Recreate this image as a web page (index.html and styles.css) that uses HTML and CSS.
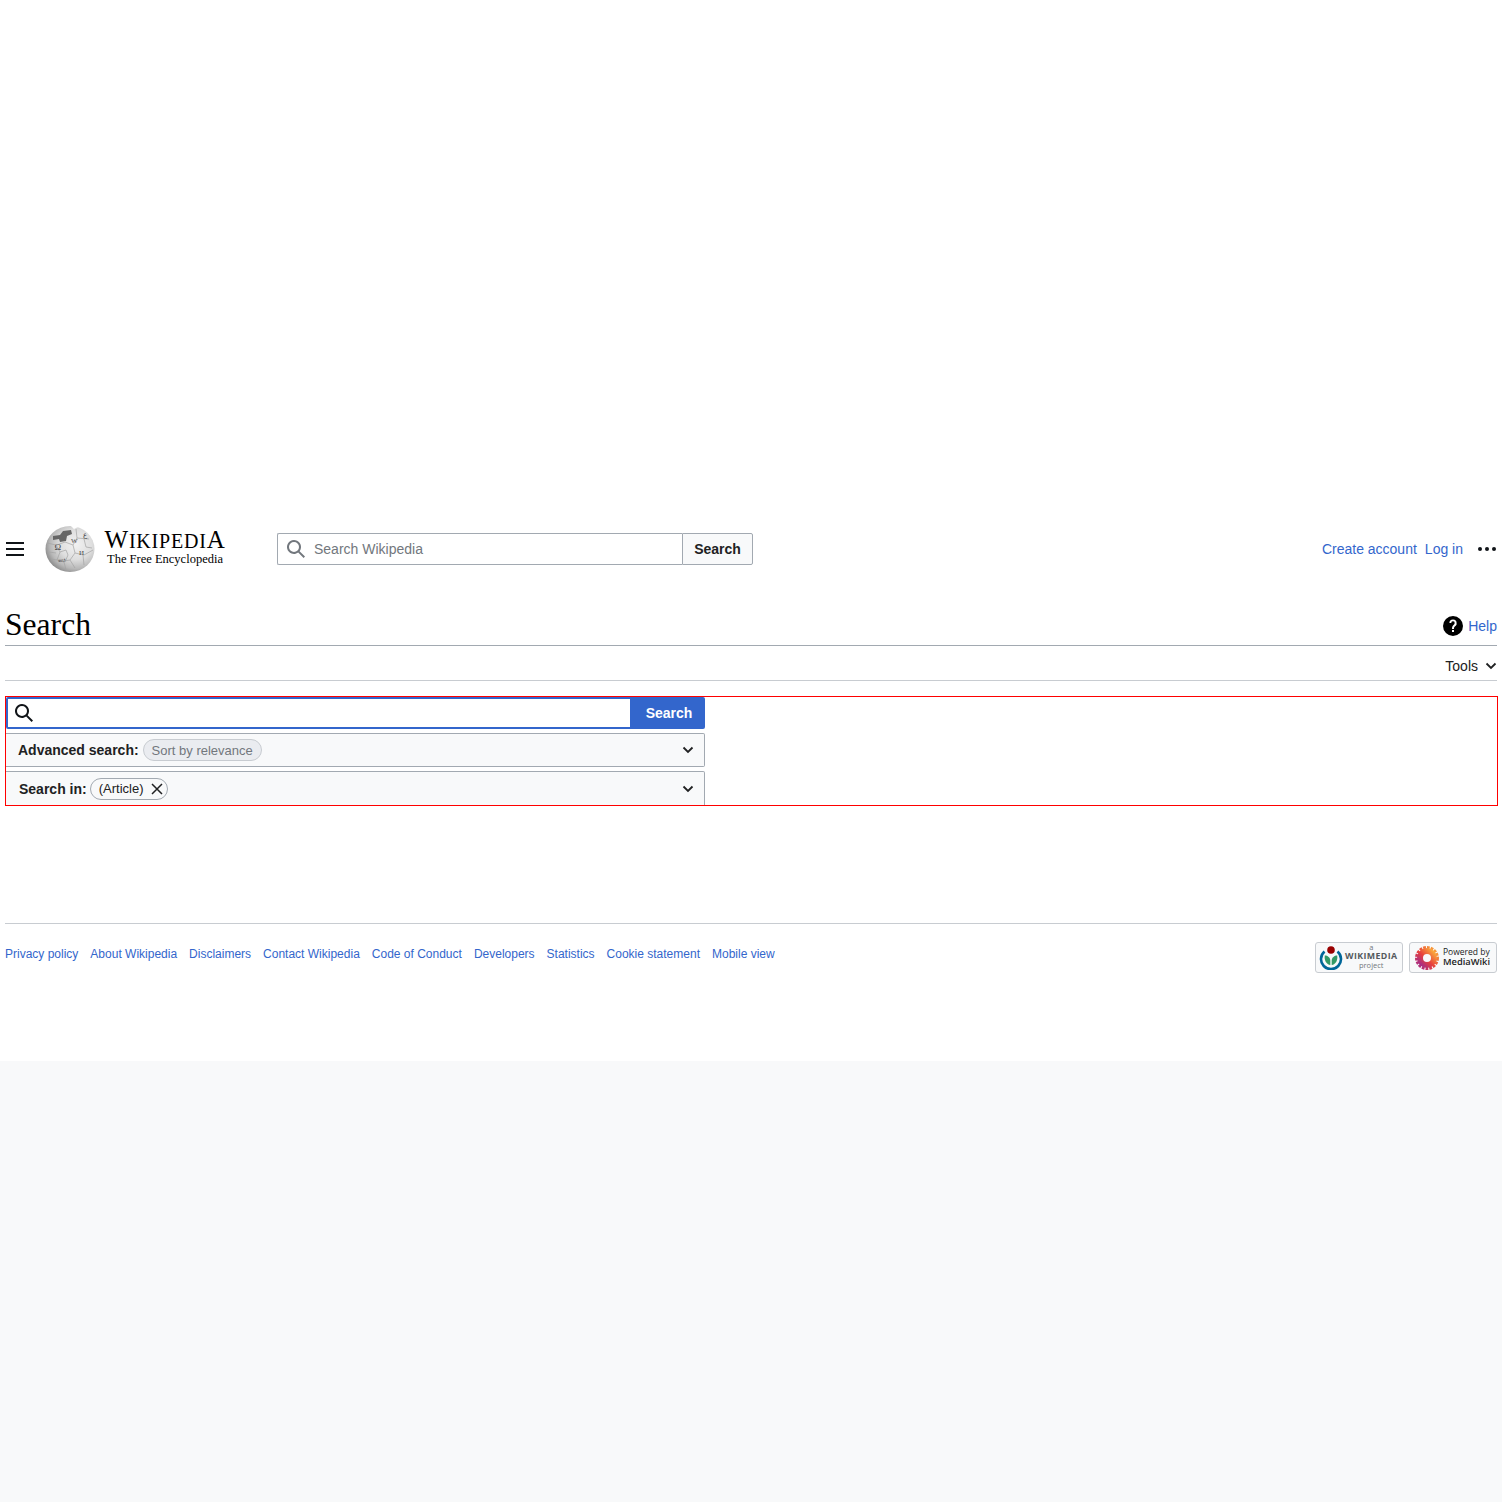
FILE: index.html
```html
<!DOCTYPE html>
<html lang="en">
<head>
  <meta charset="UTF-8" />
  <title>Search - Wikipedia</title>
  <link rel="stylesheet" href="styles.css">
</head>
<body>
  <div class="page">
    <header class="site-header">
      <button class="menu-btn" aria-label="Main menu"><span></span><span></span><span></span></button>
      <a class="logo">
        <svg class="globe" width="50" height="50" viewBox="0 0 50 50">
          <defs>
            <radialGradient id="globeFill" cx="62%" cy="40%" r="66%">
              <stop offset="0" stop-color="#f2f2f2" />
              <stop offset="0.5" stop-color="#dedede" />
              <stop offset="0.8" stop-color="#b8b8b8" />
              <stop offset="1" stop-color="#8a8a8a" />
            </radialGradient>
          </defs>
          <ellipse cx="25" cy="25" rx="24.500" ry="23" fill="url(#globeFill)" />
          <path d="M24 0l5 5 6-3 1-2zM15 0l3 3 3-3zM38 2l3 5 6 1-2-8z" fill="#ffffff" />
          <path d="M8 12l7-1 3-4 8-1 1 4-5 2-1 5-6 1-1-3-6 1z" fill="#666666" />
          <path d="M2 19l9 2 4 7-3 8 7 2 2 8M20 18l8 3 2 8 9 2 9-5M30 29l-5 7 5 8M28 21l4-7 12 1M12 21l8-3M38 31l1 10M6 35l6 1M32 14l-1-9M15 28l6-2 2 5-3 7M4 28l7 1M39 15l2 8 6 1M25 36l-6 1" fill="none" stroke="#a4a4a4" stroke-width="0.700" />
          <text class="globe-glyph globe-omega" x="9.500" y="26">Ω</text>
          <text class="globe-glyph" x="26" y="19">W</text>
          <text class="globe-glyph" x="34" y="31">И</text>
          <text class="globe-glyph" x="13" y="38">ஸ</text>
          <text class="globe-glyph" x="38" y="13">ع</text>
        </svg>
        <span class="wordmark">
          <span class="wordmark-name">W<span class="wordmark-small">ikipedi</span>A</span>
          <span class="wordmark-tag">The Free Encyclopedia</span>
        </span>
      </a>
      <form class="top-search">
        <div class="top-search-input">
          <svg width="20" height="20" viewBox="0 0 20 20"><path fill="#72777d" d="M12.200 13.600a7 7 0 1 1 1.400-1.400l5.400 5.400-1.400 1.400zM3 8a5 5 0 1 0 10 0A5 5 0 0 0 3 8z" /></svg>
          <span>Search Wikipedia</span>
        </div>
        <button class="top-search-btn" type="button">Search</button>
      </form>
      <nav class="user-links">
        <a>Create account</a>
        <a>Log in</a>
        <span class="dots"><i></i><i></i><i></i></span>
      </nav>
    </header>

    <div class="title-row">
      <h1>Search</h1>
      <a class="help">
        <svg width="20" height="20" viewBox="0 0 20 20"><path d="M10 0a10 10 0 1 0 0 20 10 10 0 0 0 0-20zm1 16H9v-2h2zm2.700-7.800a3.600 3.600 0 0 1-1 1.500l-.9.9c-.5.5-.8.9-.8 2.400H9v-.5c0-1.100.3-2.100.8-2.800l1.200-1.300c.4-.3.6-.7.6-1.200A1.600 1.600 0 0 0 10 5.200 1.600 1.600 0 0 0 8.300 7H6.400a3.600 3.600 0 0 1 7.200 0c0 .4 0 .8-.1 1.200z" /></svg>
        <span>Help</span>
      </a>
    </div>

    <div class="tools-row">
      <span>Tools</span>
      <svg class="chev" width="12" height="12" viewBox="0 0 12 12"><path d="M1.500 3.500L6 8l4.500-4.500" /></svg>
    </div>

    <form class="search-form">
      <div class="search-line">
        <div class="search-input">
          <svg width="20" height="20" viewBox="0 0 20 20"><path fill="#101418" d="M12.200 13.600a7 7 0 1 1 1.400-1.400l5.400 5.400-1.400 1.400zM3 8a5 5 0 1 0 10 0A5 5 0 0 0 3 8z" /></svg>
        </div>
        <button class="search-btn" type="button">Search</button>
      </div>
      <div class="option-row advanced">
        <b>Advanced search:</b>
        <span class="chip chip-off">Sort by relevance</span>
        <svg class="chev" width="12" height="12" viewBox="0 0 12 12"><path d="M1.500 3.500L6 8l4.500-4.500" /></svg>
      </div>
      <div class="option-row namespace">
        <b>Search in:</b>
        <span class="chip chip-article">(Article)
          <svg width="12" height="12" viewBox="0 0 12 12"><path d="M1 1l10 10M11 1L1 11" /></svg>
        </span>
        <svg class="chev" width="12" height="12" viewBox="0 0 12 12"><path d="M1.500 3.500L6 8l4.500-4.500" /></svg>
      </div>
    </form>

    <footer class="site-footer">
      <ul class="footer-links">
        <li><a>Privacy policy</a></li>
        <li><a>About Wikipedia</a></li>
        <li><a>Disclaimers</a></li>
        <li><a>Contact Wikipedia</a></li>
        <li><a>Code of Conduct</a></li>
        <li><a>Developers</a></li>
        <li><a>Statistics</a></li>
        <li><a>Cookie statement</a></li>
        <li><a>Mobile view</a></li>
      </ul>
      <div class="badges">
        <a class="badge">
          <svg width="24" height="24" viewBox="0 0 24 24">
            <path d="M5.500 5.500A10 10 0 1 0 18.500 5.500" fill="none" stroke="#006699" stroke-width="2.600" />
            <path d="M11.300 19C7.500 18.500 5 14.500 5.800 9.500 8.500 9.500 11.300 11.500 11.300 14.500z" fill="#339966" />
            <path d="M12.700 19C16.500 18.500 19 14.500 18.200 9.500 15.500 9.500 12.700 11.500 12.700 14.500z" fill="#339966" />
            <circle cx="12" cy="4" r="3.800" fill="#990000" />
          </svg>
          <span class="badge-wm"><small>a</small><b>WIKIMEDIA</b><small>project</small></span>
        </a>
        <a class="badge badge-powered">
          <svg width="24" height="24" viewBox="0 0 24 24">
            <defs>
              <linearGradient id="mwFill" x1="0" y1="1" x2="1" y2="0">
                <stop offset="0" stop-color="#a02c8c" />
                <stop offset="0.45" stop-color="#e8413c" />
                <stop offset="1" stop-color="#fbb03b" />
              </linearGradient>
            </defs>
            <circle cx="12" cy="12" r="10" fill="none" stroke="url(#mwFill)" stroke-width="4" stroke-dasharray="2.600 1" />
            <circle cx="12" cy="12" r="7" fill="none" stroke="url(#mwFill)" stroke-width="6" />
          </svg>
          <span class="badge-mw">Powered by<b>MediaWiki</b></span>
        </a>
      </div>
    </footer>
  </div>
</body>
</html>
```

FILE: styles.css
```css
* {
  box-sizing: border-box;
}

body {
  margin: 0;
  background: #f8f9fa;
  color: #202122;
  font-family: "Liberation Sans", Arial, sans-serif;
  font-size: 14px;
}

a {
  color: #3366cc;
  text-decoration: none;
}

.page {
  height: 1061px;
  padding: 524px 5px 0;
  background: #ffffff;
}

/* header */
.site-header {
  display: flex;
  align-items: center;
  height: 50px;
}

.menu-btn {
  display: flex;
  flex-direction: column;
  gap: 4px;
  width: 18px;
  margin-left: 1px;
  padding: 0;
  border: none;
  background: none;
}

.menu-btn span {
  display: block;
  width: 18px;
  height: 2px;
  background: #101418;
}

.logo {
  display: flex;
  align-items: center;
  margin-left: 21px;
  color: #000000;
}

.globe-glyph {
  font-family: "Liberation Serif", serif;
  font-size: 7px;
  fill: #4a4a4a;
}

.globe-omega {
  font-size: 9px;
}

.wordmark {
  display: flex;
  flex-direction: column;
  align-items: center;
  width: 120px;
  margin-bottom: 4px;
  margin-left: 10px;
  font-family: "Liberation Serif", serif;
}

.wordmark-name {
  font-size: 25px;
  line-height: 24px;
  letter-spacing: 0.800px;
  white-space: nowrap;
}

.wordmark-small {
  font-size: 20px;
  text-transform: uppercase;
}

.wordmark-tag {
  font-size: 12.500px;
  line-height: 13px;
}

.top-search {
  display: flex;
  width: 476px;
  height: 32px;
  margin-left: 52px;
}

.top-search-input {
  display: flex;
  flex: 1;
  align-items: center;
  gap: 8px;
  padding-left: 8px;
  border: 1px solid #a2a9b1;
  border-right: none;
  border-radius: 2px 0 0 2px;
  color: #72777d;
}

.top-search-btn {
  width: 71px;
  border: 1px solid #a2a9b1;
  border-radius: 0 2px 2px 0;
  background: #f8f9fa;
  color: #202122;
  font-family: inherit;
  font-size: 14px;
  font-weight: bold;
}

.user-links {
  display: flex;
  align-items: center;
  gap: 8px;
  margin-left: auto;
}

.dots {
  display: flex;
  gap: 3px;
  margin-left: 7px;
  padding-right: 1px;
}

.dots i {
  display: block;
  width: 4px;
  height: 4px;
  border-radius: 50%;
  background: #101418;
}

/* title */
.title-row {
  display: flex;
  align-items: flex-end;
  justify-content: space-between;
  height: 47px;
  margin-top: 25px;
  border-bottom: 1px solid #a2a9b1;
}

h1 {
  margin: 0 0 1px;
  color: #000000;
  font-family: "Liberation Serif", serif;
  font-size: 31.600px;
  font-weight: normal;
  line-height: 38px;
}

.help {
  display: flex;
  align-items: center;
  gap: 5px;
  margin-bottom: 9px;
}

.tools-row {
  display: flex;
  align-items: center;
  justify-content: flex-end;
  gap: 7px;
  height: 35px;
  padding-top: 6px;
  border-bottom: 1px solid #c8ccd1;
  color: #202122;
}

.chev path {
  fill: none;
  stroke: #202122;
  stroke-width: 1.800;
}

/* search form */
.search-form {
  height: 110px;
  margin: 15px -1px 0 0;
  border: 1px solid #ff0000;
  overflow: hidden;
}

.search-line {
  display: flex;
  width: 699px;
  height: 32px;
}

.search-input {
  display: flex;
  flex: 1;
  align-items: center;
  padding-left: 6px;
  border: 2px solid #3366cc;
  border-radius: 2px 0 0 2px;
}

.search-btn {
  width: 73px;
  padding: 0 0 0 1px;
  border: none;
  border-radius: 0 2px 2px 0;
  background: #3366cc;
  color: #ffffff;
  font-family: inherit;
  font-size: 14px;
  font-weight: bold;
}

.option-row {
  display: flex;
  align-items: center;
  gap: 4px;
  width: 699px;
  height: 34px;
  margin-top: 4px;
  padding-right: 10px;
  border: 1px solid #a2a9b1;
  border-left: none;
  border-radius: 0 2px 2px 0;
  background: #f8f9fa;
}

.advanced {
  padding-left: 12px;
}

.namespace {
  gap: 3px;
  height: 36px;
  padding-bottom: 1px;
  padding-left: 13px;
}

.option-row .chev {
  margin-left: auto;
}

.chip {
  display: flex;
  align-items: center;
  gap: 8px;
  height: 22px;
  padding: 0 8px;
  border: 1px solid #a2a9b1;
  border-radius: 11px;
  font-size: 13px;
}

.chip svg path {
  fill: none;
  stroke: #202122;
  stroke-width: 1.500;
}

.chip-article {
  padding-right: 4px;
}

.chip-off {
  border-color: #c8ccd1;
  background: #eaecf0;
  color: #72777d;
}

/* footer */
.site-footer {
  display: flex;
  justify-content: space-between;
  height: 60px;
  margin-top: 117px;
  padding-top: 18px;
  border-top: 1px solid #c8ccd1;
  font-size: 12px;
}

.footer-links {
  display: flex;
  gap: 12px;
  margin: 0;
  padding: 5px 0 0;
  list-style: none;
}

.badges {
  display: flex;
  gap: 6px;
}

.badge {
  display: flex;
  align-items: center;
  gap: 2px;
  width: 88px;
  height: 31px;
  padding-left: 3px;
  border: 1px solid #c8ccd1;
  border-radius: 3px;
  background: #f8f9fa;
  color: #202122;
}

.badge-powered {
  gap: 4px;
  padding-left: 5px;
}

.badge-wm {
  display: flex;
  flex-direction: column;
  align-items: center;
  margin-bottom: 4px;
  font-family: "Open Sans", sans-serif;
  line-height: 8px;
}

.badge-wm small {
  color: #72777d;
  font-size: 7.500px;
}

.badge-wm b {
  color: #54595d;
  font-size: 8.800px;
  letter-spacing: 0.400px;
  line-height: 10px;
}

.badge-mw {
  display: flex;
  flex-direction: column;
  margin-bottom: 2px;
  font-family: "Open Sans", sans-serif;
  font-size: 8.500px;
  line-height: 10px;
}

.badge-mw b {
  font-size: 9.300px;
  font-weight: 600;
}
```
